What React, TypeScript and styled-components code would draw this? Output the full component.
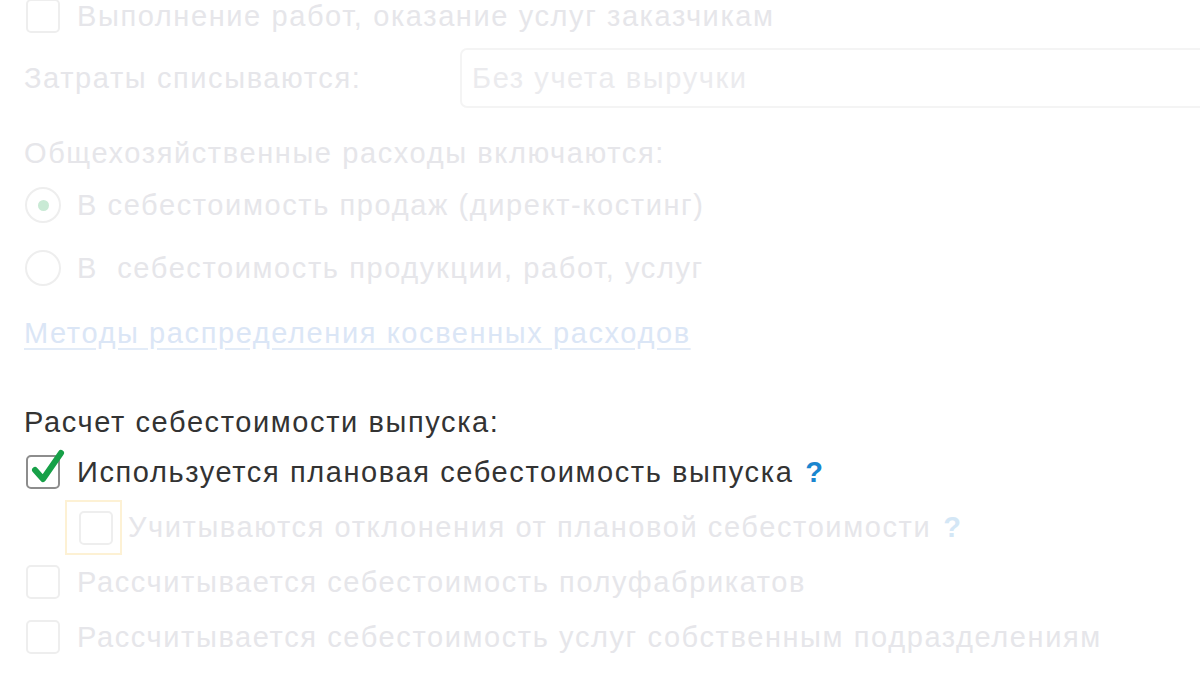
import React from "react";
import styled, { createGlobalStyle } from "styled-components";

const Global = createGlobalStyle`
  html, body { margin: 0; padding: 0; background: #ffffff; overflow: hidden; }
  body { font-family: "Liberation Sans", Arial, sans-serif; }
`;

const Page = styled.div`
  width: 1200px;
  height: 675px;
  overflow: hidden;
  display: flex;
  flex-direction: column;
  padding-left: 24px;
  box-sizing: border-box;
  font-size: 29px;
  letter-spacing: 1.6px;
  color: #e6e6ea;
`;

const Row = styled.div<{ $top: number; $h?: number; $indent?: number }>`
  display: flex;
  align-items: center;
  height: ${(p) => p.$h ?? 40}px;
  margin-top: ${(p) => p.$top}px;
  padding-left: ${(p) => p.$indent ?? 0}px;
  flex-shrink: 0;
  white-space: nowrap;
`;

const Label = styled.span<{ $dark?: boolean }>`
  color: ${(p) => (p.$dark ? "#333333" : "#e6e6ea")};
  line-height: 1;
`;

const Box = styled.span<{ $checked?: boolean }>`
  width: 34px;
  height: 34px;
  box-sizing: border-box;
  border: 2px solid ${(p) => (p.$checked ? "#8d8d8d" : "#eeeeee")};
  border-radius: 5px;
  margin-left: 2px;
  margin-right: 17px;
  position: relative;
  flex-shrink: 0;
  background: #fff;
`;

const Check = styled.svg`
  position: absolute;
  left: 1px;
  top: -9px;
  width: 36px;
  height: 38px;
`;

const Focus = styled.span`
  display: flex;
  align-items: center;
  justify-content: center;
  width: 57px;
  height: 55px;
  box-sizing: border-box;
  border: 2px solid #fdf1d4;
  margin-right: 6px;
  margin-left: -18px;
`;

const InnerBox = styled.span`
  width: 34px;
  height: 34px;
  box-sizing: border-box;
  border: 2px solid #eeeeee;
  border-radius: 5px;
  margin-left: 4px;
`;

const Radio = styled.span<{ $on?: boolean }>`
  width: 36px;
  height: 36px;
  box-sizing: border-box;
  border: 2px solid #eeeeee;
  border-radius: 50%;
  margin-left: 1px;
  margin-right: 16px;
  display: flex;
  align-items: center;
  justify-content: center;
  flex-shrink: 0;
  &::after {
    content: "";
    display: ${(p) => (p.$on ? "block" : "none")};
    width: 11px;
    height: 11px;
    border-radius: 50%;
    background: #c9ead5;
  }
`;

const Caption = styled.span`
  width: 436px;
  flex-shrink: 0;
`;

const Field = styled.div`
  flex: 1;
  height: 60px;
  margin-right: -40px;
  border: 2px solid #f4f4f4;
  border-radius: 7px;
  display: flex;
  align-items: center;
  padding-left: 10px;
  box-sizing: border-box;
  color: #ebebee;
`;

const Link = styled.span`
  color: #dbe6f6;
  text-decoration: underline;
  text-decoration-color: #e3ecf8;
  text-underline-offset: 5px;
`;

const Help = styled.span<{ $faded?: boolean }>`
  color: ${(p) => (p.$faded ? "#d4e7f6" : "#1a86cf")};
  font-weight: bold;
  margin-left: 12px;
`;

export default function App() {
  return (
    <>
      <Global />
      <Page>
        <Row $top={-3} $h={38}>
          <Box />
          <Label>Выполнение работ, оказание услуг заказчикам</Label>
        </Row>
        <Row $top={13} $h={60}>
          <Caption>
            <Label>Затраты списываются:</Label>
          </Caption>
          <Field>Без учета выручки</Field>
        </Row>
        <Row $top={25}>
          <Label>Общехозяйственные расходы включаются:</Label>
        </Row>
        <Row $top={12}>
          <Radio $on />
          <Label>В себестоимость продаж (директ-костинг)</Label>
        </Row>
        <Row $top={23}>
          <Radio />
          <Label>В&nbsp; себестоимость продукции, работ, услуг</Label>
        </Row>
        <Row $top={25}>
          <Link>Методы распределения косвенных расходов</Link>
        </Row>
        <Row $top={49}>
          <Label $dark>Расчет себестоимости выпуска:</Label>
        </Row>
        <Row $top={10}>
          <Box $checked>
            <Check viewBox="0 0 36 38">
              <path
                d="M6 22 L14 31 L32 5"
                fill="none"
                stroke="#17a048"
                strokeWidth="6"
                strokeLinecap="round"
                strokeLinejoin="round"
              />
            </Check>
          </Box>
          <Label $dark>Используется плановая себестоимость выпуска</Label>
          <Help>?</Help>
        </Row>
        <Row $top={8} $h={55} $indent={59}>
          <Focus>
            <InnerBox />
          </Focus>
          <Label>Учитываются отклонения от плановой себестоимости</Label>
          <Help $faded>?</Help>
        </Row>
        <Row $top={7}>
          <Box />
          <Label>Рассчитывается себестоимость полуфабрикатов</Label>
        </Row>
        <Row $top={15}>
          <Box />
          <Label>Рассчитывается себестоимость услуг собственным подразделениям</Label>
        </Row>
      </Page>
    </>
  );
}
